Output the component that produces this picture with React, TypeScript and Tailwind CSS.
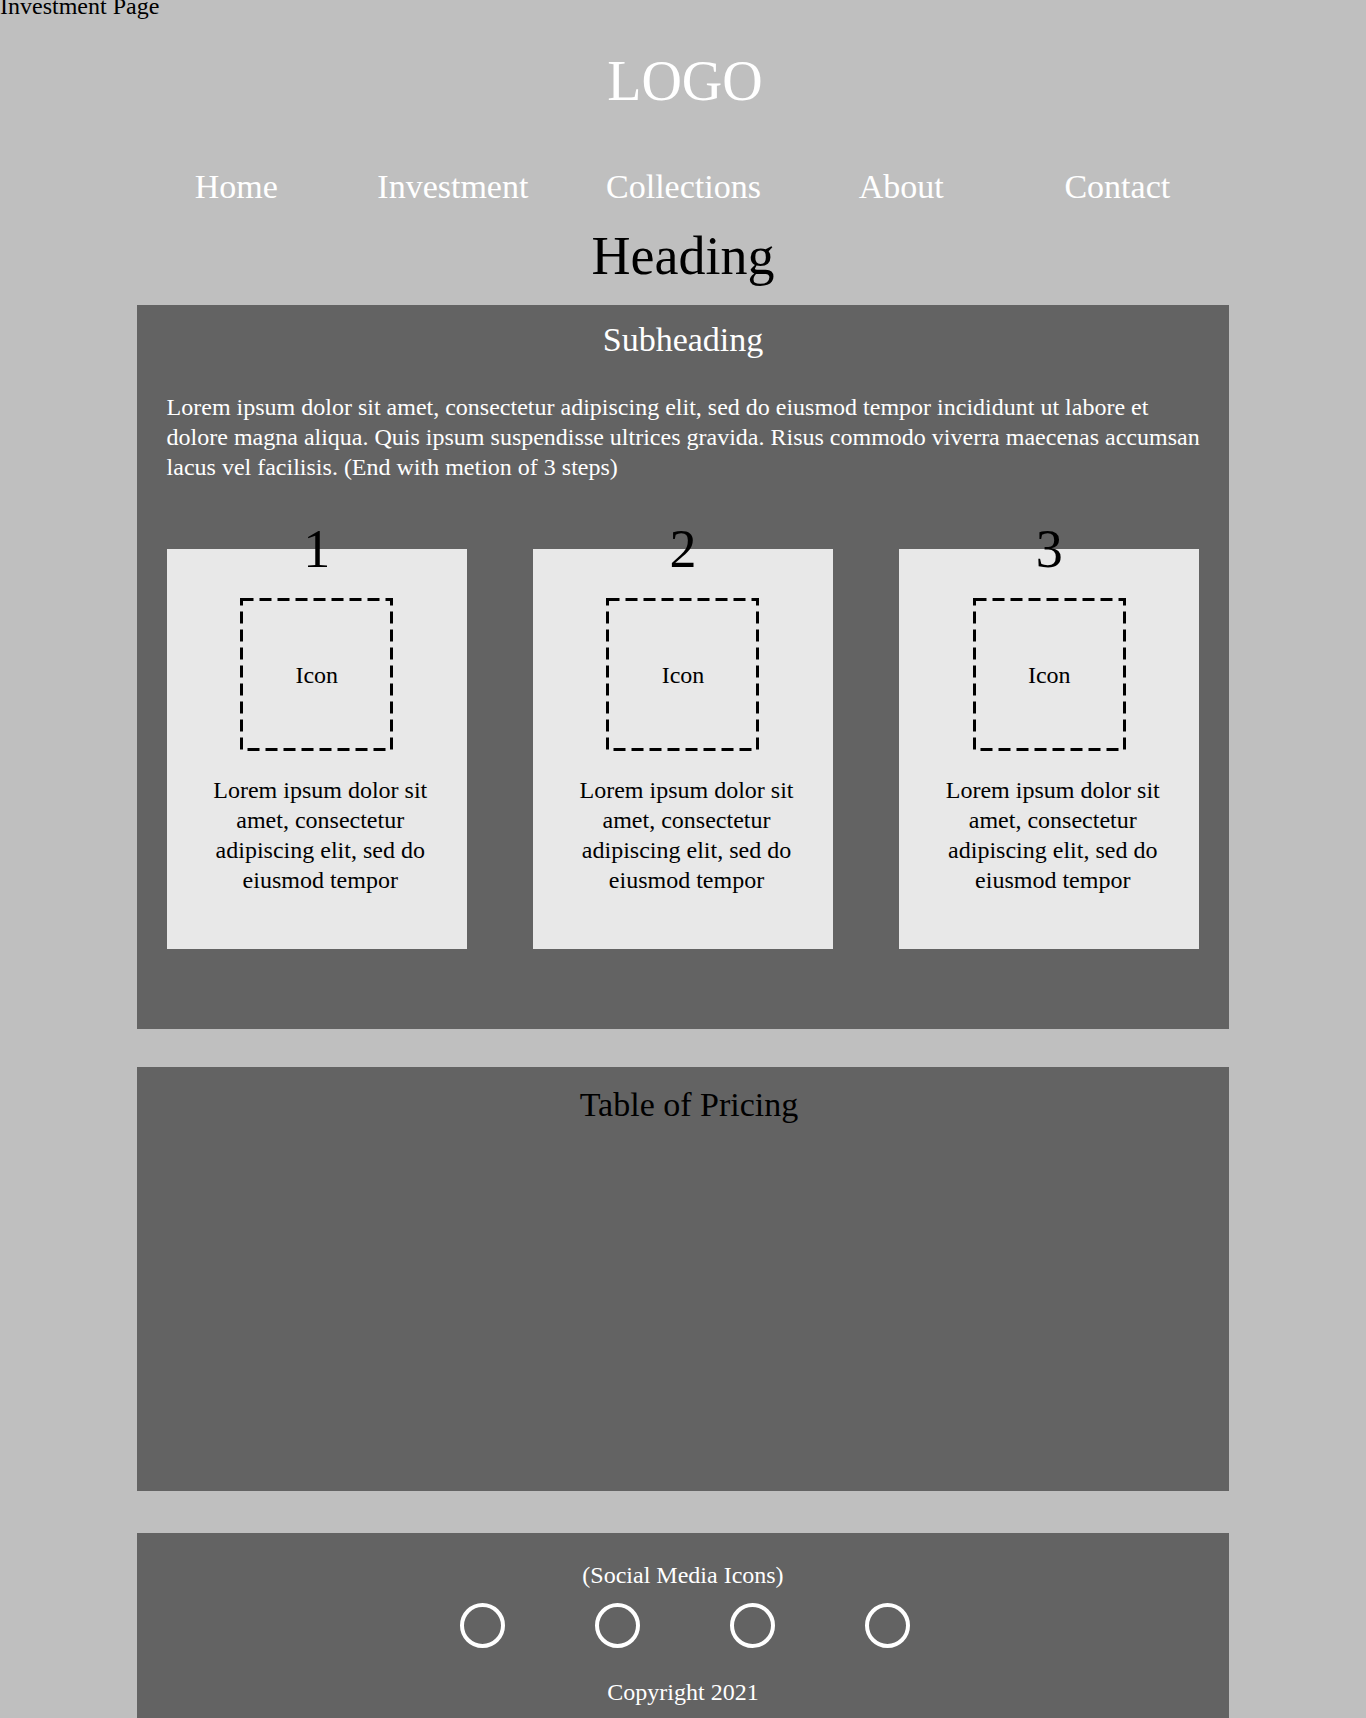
const links = ["Home", "Investment", "Collections", "About", "Contact"];
const steps = [1, 2, 3];
const socials = ["Social link 1", "Social link 2", "Social link 3", "Social link 4"];

function IconPlaceholder() {
  return (
    <div className="relative mx-auto mt-[17px] flex size-[153px] items-center justify-center">
      <svg
        className="absolute inset-0 size-full"
        viewBox="0 0 153 153"
        fill="none"
        stroke="#000"
        strokeWidth="3"
        strokeDasharray="12 6"
        aria-hidden="true"
      >
        <path d="M1.5 1.5H151.5V151.5H1.5Z" />
      </svg>
      <span>Icon</span>
    </div>
  );
}

function StepCard({ step }: { step: number }) {
  return (
    <li className="flex-1 bg-[#e8e8e8] pb-[54px] text-center">
      <h3 className="-mt-8 text-[54px] leading-[64px]">{step}</h3>
      <IconPlaceholder />
      <p className="mt-6 pr-[34px] pl-[41px]">
        Lorem ipsum dolor sit amet, consectetur adipiscing elit, sed do eiusmod tempor
      </p>
    </li>
  );
}

export default function App() {
  return (
    <div className="min-h-screen bg-[#bfbfbf] font-['Liberation_Serif',serif] text-[24px] leading-[30px] text-black">
      <p className="leading-3">Investment Page</p>

      <header className="mx-auto w-4/5 text-center text-white">
        <div className="pt-[37px] pl-1 text-[56px] leading-[64px]">LOGO</div>
        <nav
          aria-label="Main"
          className="mt-[54px] grid grid-cols-[200fr_235fr_228fr_209fr_225fr] text-[34px] leading-10"
        >
          {links.map((label) => (
            <a key={label} href="#">
              {label}
            </a>
          ))}
        </nav>
      </header>

      <main className="mx-auto w-4/5">
        <h1 className="mt-[17px] text-center text-[54px] leading-[64px]">Heading</h1>

        <section className="mt-[17px] bg-[#636363] px-[30px] pt-[15px] pb-20">
          <h2 className="text-center text-[34px] leading-10 text-white">Subheading</h2>
          <p className="-mr-4 mt-8 text-white">
            Lorem ipsum dolor sit amet, consectetur adipiscing elit, sed do eiusmod tempor incididunt ut labore et
            <br />
            dolore magna aliqua. Quis ipsum suspendisse ultrices gravida. Risus commodo viverra maecenas accumsan
            <br />
            lacus vel facilisis. (End with metion of 3 steps)
          </p>
          <ol className="mt-[67px] flex gap-[66px]">
            {steps.map((step) => (
              <StepCard key={step} step={step} />
            ))}
          </ol>
        </section>

        <section className="mt-[38px] min-h-[424px] bg-[#636363] pt-[18px] pl-3">
          <h2 className="text-center text-[34px] leading-10">Table of Pricing</h2>
        </section>
      </main>

      <footer className="mx-auto mt-[42px] w-4/5 bg-[#636363] pt-[27px] pb-[11px] text-center text-white">
        <p>(Social Media Icons)</p>
        <ul className="mt-[13px] flex justify-center gap-[90px] pl-1">
          {socials.map((label) => (
            <li key={label}>
              <a href="#" aria-label={label} className="block size-[45px] rounded-full border-4 border-white" />
            </li>
          ))}
        </ul>
        <p className="mt-[29px]">Copyright 2021</p>
      </footer>
    </div>
  );
}
